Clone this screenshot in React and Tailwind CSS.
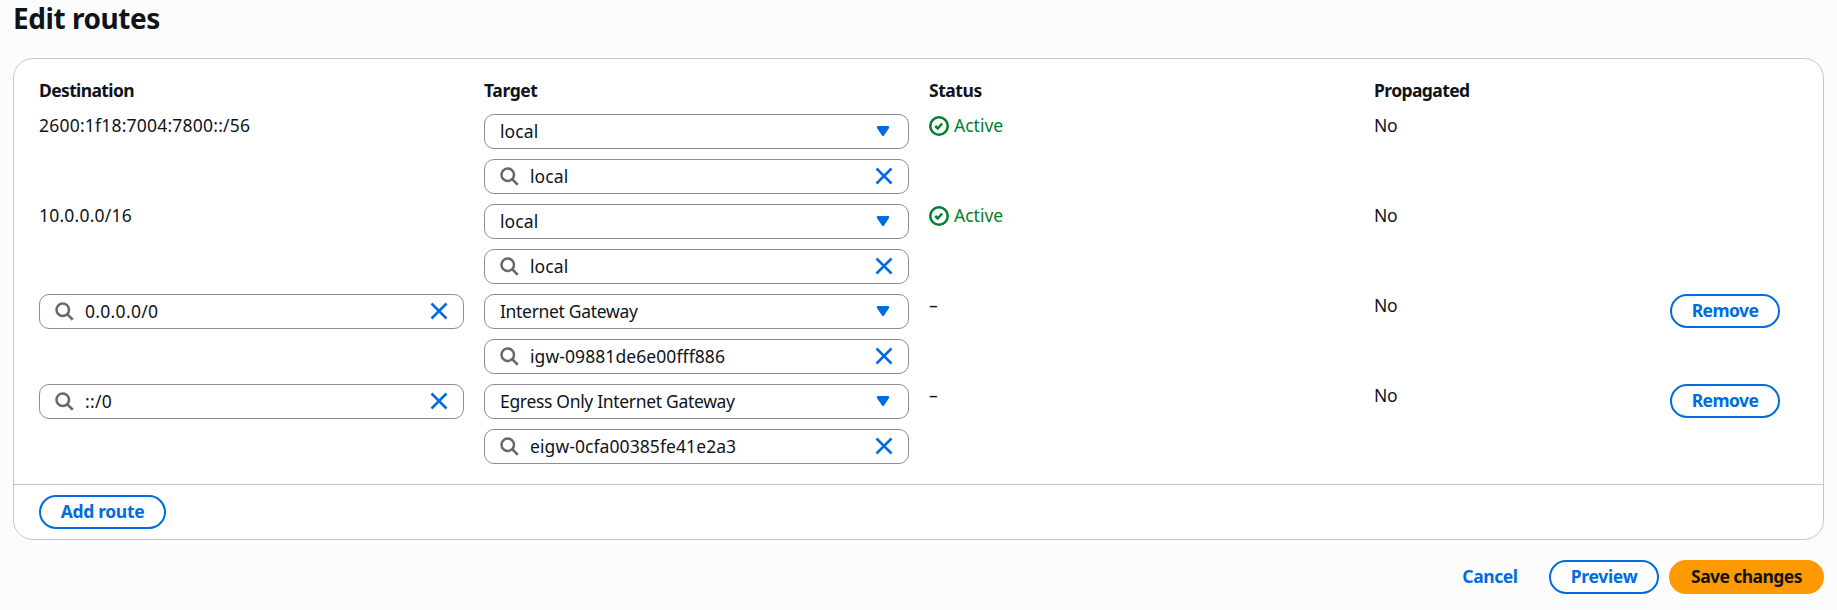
const routes = [
  { destination: '2600:1f18:7004:7800::/56', target: 'local', id: 'local', active: true },
  { destination: '10.0.0.0/16', target: 'local', id: 'local', active: true },
  { destination: '0.0.0.0/0', target: 'Internet Gateway', id: 'igw-09881de6e00fff886', editable: true },
  { destination: '::/0', target: 'Egress Only Internet Gateway', id: 'eigw-0cfa00385fe41e2a3', editable: true },
];

function SearchIcon() {
  return (
    <svg className="mb-px size-5 shrink-0 text-[#656871]" viewBox="0 0 16 16" fill="none" stroke="currentColor" strokeWidth="2">
      <circle cx="7" cy="7" r="5" />
      <path d="m15 15-4.5-4.5" />
    </svg>
  );
}

function CloseIcon() {
  return (
    <svg className="mb-px size-5 shrink-0 text-[#006ce0]" viewBox="0 0 16 16" fill="none" stroke="currentColor" strokeWidth="2">
      <path d="m2 2 12 12M14 2 2 14" />
    </svg>
  );
}

function CaretIcon() {
  return (
    <svg className="mb-px size-5 shrink-0 text-[#006ce0]" viewBox="0 0 16 16" fill="currentColor" stroke="currentColor" strokeWidth="2" strokeLinejoin="round">
      <path d="M4 5h8l-4 6z" />
    </svg>
  );
}

function ActiveStatus() {
  return (
    <div className="flex items-start gap-[5px] text-[#00802f]">
      <svg className="mt-0.5 size-5 shrink-0" viewBox="0 0 16 16" fill="none" stroke="currentColor" strokeWidth="2">
        <circle cx="8" cy="8" r="7" />
        <path d="m5 8 2 2 3.5-4" />
      </svg>
      <span>Active</span>
    </div>
  );
}

function SearchInput({ value, spacing }) {
  return (
    <div className="flex h-[35px] items-center rounded-[10px] border border-[#8c8c94] bg-white pr-3.5 pl-3.5">
      <SearchIcon />
      <span className={`ml-[11px] flex-1 pb-px leading-[25px] ${spacing}`}>{value}</span>
      <CloseIcon />
    </div>
  );
}

function Select({ value, spacing }) {
  return (
    <div className="flex h-[35px] items-center rounded-[10px] border border-[#8c8c94] bg-white pr-[15px] pl-[15px]">
      <span className={`flex-1 pb-px leading-[25px] ${spacing}`}>{value}</span>
      <CaretIcon />
    </div>
  );
}

function Button({ className, children }) {
  return (
    <button className={`flex h-[34px] items-center justify-center rounded-full border-2 pb-[3px] font-bold ${className}`}>
      {children}
    </button>
  );
}

const columns = 'grid grid-cols-[425px_425px_425px_276px_110px] gap-x-5';

export default function App() {
  return (
    <main className="h-[610px] w-[1837px] overflow-hidden bg-[#fcfcfd] pr-[13px] pl-[13px] font-['Noto_Sans',sans-serif] text-[17.5px] leading-[22px] text-[#0f141a]">
      <h1 className="h-[58px] text-[28px] leading-[37px] font-bold tracking-[-0.45px]">Edit routes</h1>
      <section className="flex h-[482px] flex-col rounded-[20px] border border-[#c6c6cd] bg-white">
        <div className="h-[425px] pt-5 pl-[25px]">
          <div className={`${columns} h-[35px] font-bold`}>
            <span className="tracking-[-0.63px]">Destination</span>
            <span className="tracking-[-0.4px]">Target</span>
            <span className="tracking-[-0.45px]">Status</span>
            <span className="tracking-[-0.6px]">Propagated</span>
          </div>
          {routes.map((r) => (
            <div key={r.destination} className={`${columns} h-[90px] items-start`}>
              {r.editable ? (
                <SearchInput value={r.destination} spacing="tracking-[0.3px]" />
              ) : (
                <span className="tracking-[0.21px]">{r.destination}</span>
              )}
              <div className="flex flex-col gap-2.5">
                <Select value={r.target} spacing={r.editable ? 'tracking-[-0.32px]' : 'tracking-[0.1px]'} />
                <SearchInput value={r.id} spacing="tracking-[0.08px]" />
              </div>
              {r.active ? <ActiveStatus /> : <span>–</span>}
              <span className="tracking-[-0.3px]">No</span>
              {r.editable && (
                <Button className="w-[110px] justify-self-end border-[#006ce0] tracking-[-0.55px] text-[#006ce0]">Remove</Button>
              )}
            </div>
          ))}
        </div>
        <div className="flex flex-1 items-center border-t border-[#c6c6cd] pl-[25px]">
          <Button className="w-[127px] border-[#006ce0] tracking-[-0.35px] text-[#006ce0]">Add route</Button>
        </div>
      </section>
      <footer className="mt-5 flex items-center justify-end">
        <Button className="mr-2.5 w-[98px] border-transparent tracking-[-0.4px] text-[#006ce0]">Cancel</Button>
        <Button className="mr-2.5 w-[110px] border-[#006ce0] bg-white tracking-[-0.3px] text-[#006ce0]">Preview</Button>
        <Button className="w-[155px] border-[#ff9900] bg-[#ff9900] tracking-[-0.57px]">Save changes</Button>
      </footer>
    </main>
  );
}
